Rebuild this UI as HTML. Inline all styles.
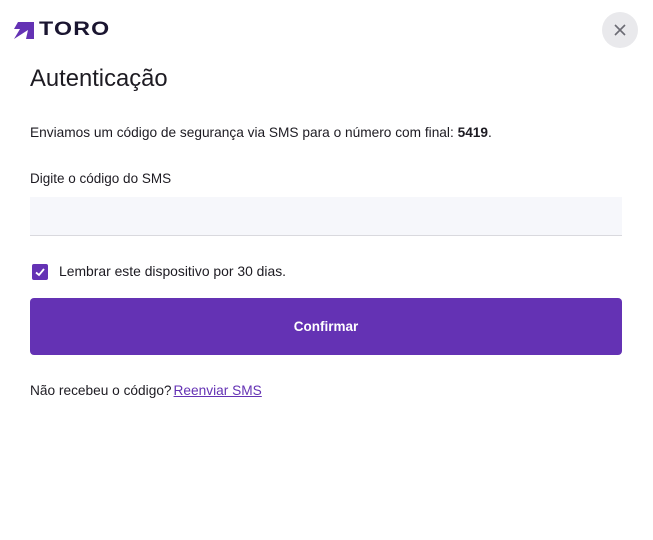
<!DOCTYPE html>
<html><head><meta charset="utf-8"><style>
body{margin:0;width:653px;height:540px;background:#fff;font-family:"Liberation Sans",sans-serif;color:#1d1b22;position:relative;overflow:hidden}
.a{position:absolute}
</style></head><body>
<svg class="a" style="left:14px;top:22px" width="20" height="17" viewBox="0 0 20 17"><path d="M4 0H20V17H12L14 8L0 17L6 7H0Z" fill="#6432b4"/></svg>
<div class="a" style="left:39px;top:19px;font-size:19px;font-weight:900;letter-spacing:1px;color:#1a1530;transform:scaleX(1.22);transform-origin:left">TORO</div>
<div class="a" style="left:602px;top:12px;width:36px;height:36px;border-radius:50%;background:#e9e9ec"></div>
<svg class="a" style="left:614px;top:24px" width="12" height="12" viewBox="0 0 12 12"><path d="M1 1L11 11M11 1L1 11" stroke="#6b6b73" stroke-width="1.6"/></svg>
<div class="a" style="left:30px;top:65px;font-size:23.8px">Autenticação</div>
<div class="a" style="left:30px;top:125px;font-size:13.7px">Enviamos um código de segurança via SMS para o número com final: <b>5419</b>.</div>
<div class="a" style="left:30px;top:171px;font-size:13.5px">Digite o código do SMS</div>
<div class="a" style="left:30px;top:197px;width:592px;height:38px;background:#f6f7fb;border-bottom:1px solid #d9d9de"></div>
<div class="a" style="left:32px;top:264px;width:16px;height:16px;border-radius:2px;background:#6432b4"></div>
<svg class="a" style="left:32px;top:264px" width="16" height="16" viewBox="0 0 16 16"><path d="M4 8.5L7 11L12 5" stroke="#fff" stroke-width="1.8" fill="none"/></svg>
<div class="a" style="left:59px;top:263px;font-size:13.9px">Lembrar este dispositivo por 30 dias.</div>
<div class="a" style="left:30px;top:298px;width:592px;height:57px;border-radius:4px;background:#6432b4;color:#fff;font-size:13.5px;font-weight:bold;text-align:center;line-height:57px">Confirmar</div>
<div class="a" style="left:30px;top:383px;font-size:13.7px">Não recebeu o código?<span style="color:#6432b4;text-decoration:underline;margin-left:2px">Reenviar SMS</span></div>
</body></html>
